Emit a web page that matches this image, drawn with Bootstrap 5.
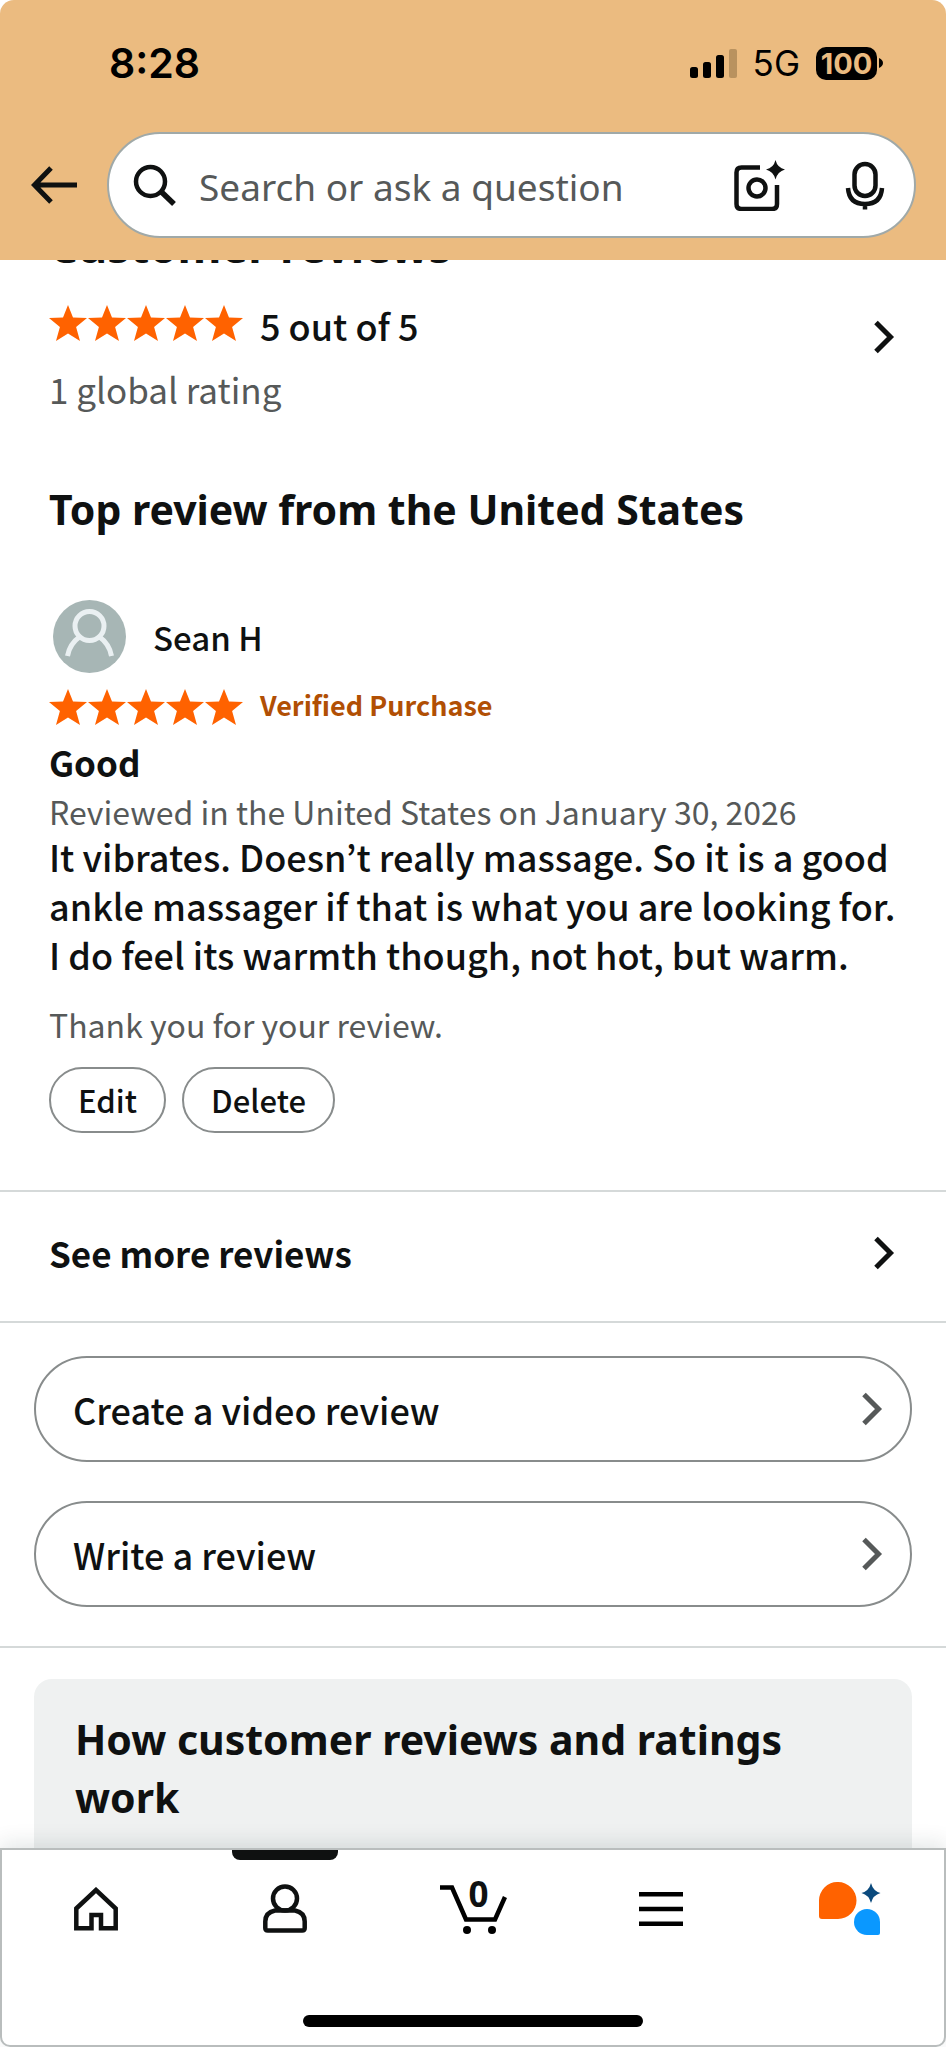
<!DOCTYPE html>
<html lang="en">
<head>
<meta charset="utf-8">
<meta name="viewport" content="width=device-width, initial-scale=1">
<title>Customer reviews</title>
<link href="https://cdn.jsdelivr.net/npm/bootstrap@5.3.0/dist/css/bootstrap.min.css" rel="stylesheet">
<style>
  :root { --ink: #0f1111; --muted: #565959; --sand: #ebbb80; --line: #d5d9d9; --gutter: 49px; }
  body { font-family: "Noto Sans CJK KR", "Noto Sans", sans-serif; font-size: 36px; line-height: 48px; font-weight: 500; color: var(--ink); background: #fff; }
  a { color: inherit; text-decoration: none; }
  svg { display: block; flex: none; }

  .app-head { background: var(--sand); border-radius: 14px 14px 0 0; padding-bottom: 22px; }
  .status { font-family: Inter, sans-serif; color: #000; padding: 33px 63px 39px 109px; line-height: 60px; }
  .clock { font-size: 41px; font-weight: 600; }
  .network { font-size: 35px; font-weight: 400; }
  .battery { background: #000; color: var(--sand); font-size: 29px; font-weight: 700; line-height: 33px; height: 33px; width: 61px; border-radius: 10px; }
  .search-row { padding: 0 30px 0 31px; gap: 30px; }
  .search-box { background: #fff; border: 2px solid #a0a9a8; border-radius: 53px; height: 106px; padding: 0 29px 0 24px; }
  .search-box input { font-family: "Noto Sans", sans-serif; font-size: 37px; line-height: 52px; color: var(--ink); padding: 4px 0 0; margin-left: 22px; }
  .search-box input::placeholder { color: var(--muted); opacity: 1; }
  .search-box button { margin-left: 60px; }
  .bare { background: none; border: 0; padding: 0; color: inherit; }

  .title { font-family: "Noto Sans", sans-serif; font-size: 41px; line-height: 58px; font-weight: 700; margin: 0; }
  .title-lg { font-size: 45px; }
  .scrolled { height: 15px; overflow: hidden; }
  .gutter { padding-left: var(--gutter); padding-right: 51px; }
  .summary { padding-top: 26px; }
  .summary > svg { margin-top: 19px; }
  .muted { color: var(--muted); font-weight: 400; }
  .count { font-size: 35px; }
  .review { padding: 67px 44px 57px var(--gutter); }
  .reviewer { margin-top: 62px; padding-left: 4px; gap: 27px; font-size: 33px; }
  .verified { color: #b14f04; font-size: 27px; line-height: 32px; font-weight: 700; }
  .stars { gap: 17px; }
  .strong { font-size: 35px; font-weight: 700; line-height: 48px; margin: 0; }
  .note { font-size: 32px; line-height: 42px; }
  .thanks { margin-bottom: 22px; }
  .review-text { line-height: 49px; }
  .pill { border: 2px solid #888c8c; border-radius: 53px; background: #fff; color: var(--ink); }
  .pill-sm { font-size: 31px; line-height: 42px; padding: 10px 27px; font-weight: 500; }
  .pill-lg { padding: 27px 27px 27px 37px; font-weight: 500; }
  .pill-lg svg { color: #565959; }
  .rule { border-top: 2px solid var(--line); }
  .more { padding-top: 37px; padding-bottom: 44px; }
  .actions { padding: 33px 34px 39px; gap: 39px; }
  .about { background: #eff1f1; border-radius: 18px 18px 0 0; margin: 31px 34px 0; padding: 31px 41px 0; }

  .tabs { background: #fff; border: 2px solid #b9bdbd; border-radius: 0 0 10px 10px; box-shadow: 0 -4px 22px rgba(0, 40, 40, .12); padding-bottom: 18px; z-index: 2; }
  .tabs .tab { height: 115px; padding-top: 2px; }
  .tab-on::before { content: ""; position: absolute; top: 0; left: 50%; margin-left: -53px; width: 106px; height: 10px; background: var(--ink); border-radius: 0 0 8px 8px; }
  .cart-count { font-family: "Noto Sans", sans-serif; font-size: 35px; line-height: 36px; font-weight: 700; position: absolute; left: 29px; top: -8px; }
  .home-bar { width: 36%; height: 12px; background: #000; border-radius: 6px; margin: 50px auto 0; }
</style>
</head>
<body class="d-flex flex-column min-vh-100">

<svg width="0" height="0" class="position-absolute" aria-hidden="true">
  <defs>
    <path id="star" d="M19 0l5 12.5 14 .4-10.900 9 3.900 14.100L19 28.500 7 36l3.900-14.100L0 12.900l14-.4z"/>
    <symbol id="five" viewBox="0 0 194 37">
      <use href="#star"/><use href="#star" x="39"/><use href="#star" x="78"/><use href="#star" x="117"/><use href="#star" x="156"/>
    </symbol>
    <symbol id="chev" viewBox="0 0 22 34"><path d="M3 2.500L17.500 17 3 31.500" fill="none" stroke="currentColor" stroke-width="5"/></symbol>
  </defs>
</svg>

<header class="app-head">
  <div class="status d-flex justify-content-between align-items-center">
    <span class="clock">8:28</span>
    <div class="d-flex align-items-center">
      <svg width="47" height="31" viewBox="0 0 47 31" aria-hidden="true">
        <rect y="19" width="8" height="11" rx="2.500"/><rect x="13" y="14" width="8" height="16" rx="2.500"/><rect x="26" y="7" width="8" height="23" rx="2.500"/><rect x="39" y="1" width="8" height="29" rx="2" fill="#b9925f"/>
      </svg>
      <span class="network ms-3 me-3">5G</span>
      <span class="battery text-center">100</span>
      <svg width="6" height="12" viewBox="0 0 6 12" aria-hidden="true"><path d="M2 1q4 2 4 5t-4 5z"/></svg>
    </div>
  </div>
  <div class="search-row d-flex align-items-center">
    <a href="#" aria-label="Back">
      <svg width="46" height="38" viewBox="0 0 46 38" fill="none" stroke="#0f1111" stroke-width="5"><path d="M46 19H4M20 2L3.500 19 20 36"/></svg>
    </a>
    <form class="search-box d-flex align-items-center flex-grow-1" role="search">
      <svg width="44" height="42" viewBox="0 0 44 42" fill="none" stroke="#0f1111" stroke-width="4.500" aria-hidden="true"><circle cx="17.500" cy="17.500" r="14.500"/><path d="M28 27.500L41 40" stroke-width="5.500"/></svg>
      <input class="form-control border-0 shadow-none bg-transparent" type="text" placeholder="Search or ask a question" aria-label="Search or ask a question">
      <button class="bare" type="button" aria-label="Search with camera">
        <svg width="51" height="51" viewBox="0 0 51 51" fill="none" stroke="#0f1111" stroke-width="4.500"><path d="M26 7.500H7.500q-5 0-5 5V44q0 5 5 5H38q5 0 5-5V25"/><circle cx="23" cy="28" r="8.500"/><path d="M41.500 0q2 8 9.500 9.500-7.500 2-9.500 10-2-8-9.500-10 7.500-1.500 9.500-9.500z" fill="#0f1111" stroke="none"/></svg>
      </button>
      <button class="bare" type="button" aria-label="Search by voice">
        <svg width="40" height="49" viewBox="0 0 40 49" fill="none" stroke="#0f1111" stroke-width="4.500"><rect x="9.500" y="3" width="21" height="32" rx="10.500"/><path d="M3 27q1 16 17 16t17-16M20 43v5.500"/></svg>
      </button>
    </form>
  </div>
</header>

<main class="flex-grow-1 d-flex flex-column">
  <div class="scrolled gutter d-flex align-items-end"><h2 class="title title-lg">Customer reviews</h2></div>

  <a href="#" class="summary gutter d-flex justify-content-between align-items-start">
    <div>
      <div class="stars d-flex align-items-start">
        <svg class="mt-1" width="194" height="37" fill="#ff6200" role="img" aria-label="5 stars"><use href="#five"/></svg>
        <span>5 out of 5</span>
      </div>
      <div class="muted count mt-3">1 global rating</div>
    </div>
    <svg width="22" height="34" aria-hidden="true"><use href="#chev"/></svg>
  </a>

  <section class="review">
    <h2 class="title">Top review from the United States</h2>
    <div class="reviewer d-flex align-items-center">
      <svg width="73" height="73" viewBox="0 0 73 73" aria-hidden="true"><circle cx="36.500" cy="36.500" r="36.500" fill="#a7b6b5"/><g fill="none" stroke="#eaf0f2" stroke-width="5"><circle cx="36.500" cy="26" r="14.500"/><path d="M14.500 56q2-12 12.500-19.500M58.500 56q-2-12-12.500-19.500"/></g></svg>
      <span>Sean H</span>
    </div>
    <div class="stars d-flex align-items-start mt-3">
      <svg width="194" height="37" fill="#ff6200" role="img" aria-label="5 stars"><use href="#five"/></svg>
      <span class="verified">Verified Purchase</span>
    </div>
    <h3 class="strong mt-2 pt-1">Good</h3>
    <p class="note muted mt-1 mb-0">Reviewed in the United States on January 30, 2026</p>
    <p class="review-text mb-4">It vibrates. Doesn’t really massage. So it is a good ankle massager if that is what you are looking for. I&nbsp;do feel its warmth though, not hot, but warm.</p>
    <p class="note muted thanks">Thank you for your review.</p>
    <div class="d-flex gap-3">
      <button type="button" class="pill pill-sm">Edit</button>
      <button type="button" class="pill pill-sm">Delete</button>
    </div>
  </section>

  <a href="#" class="rule more gutter d-flex justify-content-between align-items-center">
    <span class="strong">See more reviews</span>
    <svg width="22" height="34" aria-hidden="true"><use href="#chev"/></svg>
  </a>

  <div class="rule actions d-flex flex-column">
    <button type="button" class="pill pill-lg d-flex justify-content-between align-items-center">
      <span>Create a video review</span>
      <svg width="22" height="34" aria-hidden="true"><use href="#chev"/></svg>
    </button>
    <button type="button" class="pill pill-lg d-flex justify-content-between align-items-center">
      <span>Write a review</span>
      <svg width="22" height="34" aria-hidden="true"><use href="#chev"/></svg>
    </button>
  </div>

  <div class="rule flex-grow-1 d-flex flex-column">
    <section class="about flex-grow-1"><h2 class="title">How customer reviews and ratings work</h2></section>
  </div>
</main>

<nav class="tabs sticky-bottom" aria-label="Main">
  <div class="row g-0">
    <a href="#" class="tab col d-flex justify-content-center align-items-center" aria-label="Home">
      <svg width="44" height="44" viewBox="0 0 44 44" fill="none" stroke="#0f1111" stroke-width="4.500"><path d="M2.300 21.500L22 3l19.700 18.500v19.800H27V28h-9.500v13.300H2.300z"/></svg>
    </a>
    <a href="#" class="tab tab-on position-relative col d-flex justify-content-center align-items-center" aria-label="Account" aria-current="page">
      <svg width="44" height="49" viewBox="0 0 44 49" fill="none" stroke="#0f1111" stroke-width="4.500"><circle cx="22" cy="14.500" r="12"/><path d="M12 26.500h20q9.700 2 9.700 11V44q0 2.500-2.500 2.500H4.800q-2.500 0-2.500-2.500v-6.500q0-9 9.700-11z"/></svg>
    </a>
    <a href="#" class="tab col d-flex justify-content-center align-items-center" aria-label="Cart, 0 items">
      <span class="position-relative">
        <svg width="67" height="50" viewBox="0 0 67 50" fill="none" stroke="#000" stroke-width="4.500"><path d="M0 3.500h12L26 35.500h29L65 13"/><g fill="#000" stroke="none"><circle cx="27" cy="46" r="4"/><circle cx="52" cy="46" r="4"/></g></svg>
        <span class="cart-count">0</span>
      </span>
    </a>
    <a href="#" class="tab col d-flex justify-content-center align-items-center" aria-label="Menu">
      <svg width="44" height="34" viewBox="0 0 44 34" fill="#000"><path d="M0 0h44v4.500H0zM0 14.700h44v4.500H0zM0 29.500h44V34H0z"/></svg>
    </a>
    <a href="#" class="tab col d-flex justify-content-center align-items-center" aria-label="Shopping assistant">
      <svg width="62" height="54" viewBox="0 0 62 54"><path d="M19 0a18.500 18.500 0 0 1 0 37H3q-3 0-3-3V19A18.500 18.500 0 0 1 19 0z" fill="#ff6200"/><path d="M48 27a13 13 0 0 1 13 13v11q0 2-2 2H48a13 13 0 0 1 0-26z" fill="#0a98ff"/><path d="M52 1q2 8 9.500 10-7.500 2-9.500 10-2-8-9.500-10 7.500-2 9.500-10z" fill="#0b4a7d"/></svg>
    </a>
  </div>
  <div class="home-bar"></div>
</nav>

<script src="https://cdn.jsdelivr.net/npm/bootstrap@5.3.0/dist/js/bootstrap.bundle.min.js"></script>
</body>
</html>
